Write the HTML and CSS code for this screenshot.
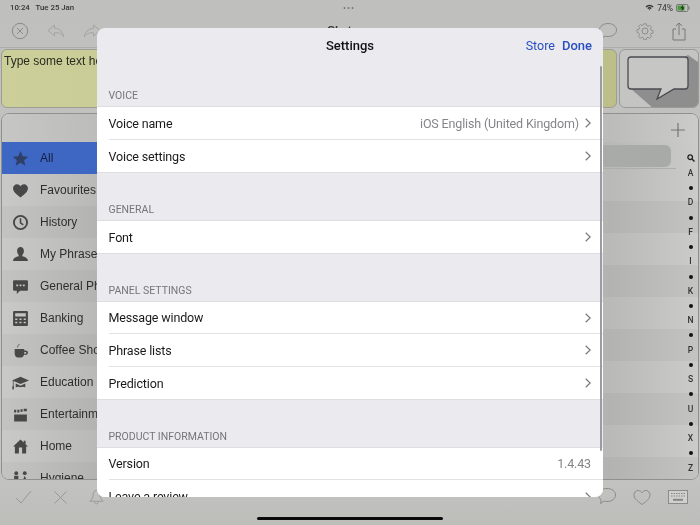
FILE: index.html
```html
<!DOCTYPE html>
<html lang="en">
<head>
  <meta charset="UTF-8" />
  <title>Settings</title>
  <meta name="viewport" content="width=device-width, initial-scale=1" />
  <link rel="stylesheet" href="styles.css">
</head>
<body>
  <div class="tablet">
    <div class="status-bar">
      <span class="status-time">10:24&nbsp;&nbsp;&nbsp;Tue 25 Jan</span>
      <span class="status-dots">&bull;&bull;&bull;</span>
      <span class="status-right">
        <svg width="9" height="7" viewBox="0 0 9 7"><path d="M0.5 2.4a5.6 5.6 0 0 1 8 0L7.5 3.4a4.2 4.2 0 0 0-6 0zM2.2 4.1a3.2 3.2 0 0 1 4.6 0L5.8 5a1.9 1.9 0 0 0-2.6 0zM3.7 5.6a1.1 1.1 0 0 1 1.6 0L4.5 6.5z" fill="#333"/></svg>
        <span>74%</span>
        <svg width="14" height="8" viewBox="0 0 14 8"><rect x="0.5" y="0.5" width="11.5" height="7" rx="1.5" fill="none" stroke="#777"/><rect x="1.5" y="1.5" width="7" height="5" fill="#4c9a40"/><rect x="12.6" y="2.6" width="1" height="2.8" fill="#777"/><path d="M7 0.8 4.6 4.3h1.8L5.6 7.2 8.4 3.5H6.6z" fill="#222"/></svg>
      </span>
    </div>

    <div class="toolbar">
      <div class="tool-group tool-group-left">
        <svg width="18" height="18" viewBox="0 0 18 18"><circle cx="9" cy="9" r="7.7" fill="none" stroke="#8b8c8a"/><path d="M6 6l6 6M12 6l-6 6" stroke="#8b8c8a"/></svg>
        <svg width="18" height="14" viewBox="0 0 18 14"><path d="M7.5 1 1 6.500l6.500 5.500V8.700c3.800-.3 6.800.6 9 4-.5-5-3.800-8-9-8.400z" fill="none" stroke="#a4a5a2"/></svg>
        <svg width="18" height="14" viewBox="0 0 18 14"><path d="M10.500 1 17 6.500 10.500 12V8.700c-3.800-.3-6.800.6-9 4 .5-5 3.800-8 9-8.400z" fill="none" stroke="#a4a5a2"/></svg>
      </div>
      <span class="toolbar-title">Chat</span>
      <div class="tool-group tool-group-right">
        <svg width="20" height="18" viewBox="0 0 20 18"><path d="M10 1.500c5 0 8.500 2.800 8.500 6.500s-3.500 6.500-8.500 6.500c-1 0-2-.1-2.900-.4L3.500 16.500l.7-3.700C2.500 11.600 1.500 9.900 1.500 8c0-3.700 3.500-6.500 8.500-6.500z" fill="none" stroke="#8b8c8a"/></svg>
        <svg width="18" height="18" viewBox="0 0 18 18"><g fill="none" stroke="#8b8c8a"><circle cx="9" cy="9" r="3"/><path d="M7.600 1h2.800l.4 2.200 1.500.7 1.900-1.200 2 2-1.200 1.900.7 1.500 2.200.4v2.800l-2.200.4-.7 1.500 1.200 1.900-2 2-1.900-1.200-1.500.7-.4 2.200H7.600l-.4-2.200-1.500-.7-1.900 1.200-2-2 1.200-1.900-.7-1.500L.1 10.400V7.600l2.200-.4.7-1.500L1.800 3.800l2-2 1.900 1.200 1.500-.7z" transform="translate(.9 .9) scale(.9)"/></g></svg>
        <svg width="14" height="19" viewBox="0 0 14 19"><path d="M4 7H1v11h12V7h-3M7 13V1M3.800 4 7 1l3.200 3" fill="none" stroke="#777876"/></svg>
      </div>
    </div>

    <div class="message-row">
      <div class="message-box">Type some text here</div>
      <div class="speak-btn">
        <svg width="78" height="59" viewBox="0 0 78 59"><path d="M10 38 34 59H78V12L68 5z" fill="#8d8e8d"/><path d="M11 7h54a3 3 0 0 1 3 3v26a3 3 0 0 1-3 3H54L37 49l4-10H11a3 3 0 0 1-3-3V10a3 3 0 0 1 3-3z" fill="#c6c7c5" stroke="#4a4b50" stroke-width="1.300"/></svg>
      </div>
    </div>

    <div class="phrase-panel">
      <div class="sidebar">
        <div class="sidebar-head"></div>
        <div class="cat-row cat-active">
          <svg class="cat-icon" viewBox="0 0 16 16"><path d="M8 1l2.100 4.800 5.200.5-3.900 3.400 1.200 5.100L8 12.100l-4.600 2.700 1.200-5.100L.7 6.300l5.200-.5z"/></svg>
          <span>All</span>
        </div>
        <div class="cat-row">
          <svg class="cat-icon" viewBox="0 0 16 16"><path d="M8 14.500C3 10.800 1 8.500 1 5.800 1 3.600 2.700 2 4.700 2 6.100 2 7.300 2.800 8 4c.7-1.200 1.900-2 3.300-2C13.300 2 15 3.600 15 5.800c0 2.700-2 5-7 8.700z"/></svg>
          <span>Favourites</span>
        </div>
        <div class="cat-row">
          <svg class="cat-icon" viewBox="0 0 16 16"><circle cx="8" cy="8" r="6.200" fill="none" stroke="#484848" stroke-width="1.800"/><path d="M8 4v4.300l2.600 2" fill="none" stroke="#484848" stroke-width="1.500"/></svg>
          <span>History</span>
        </div>
        <div class="cat-row">
          <svg class="cat-icon" viewBox="0 0 16 16"><path d="M8 1c2 0 3.200 1.600 3.200 3.700 0 1.500-.7 2.900-1.500 3.700v1.300c2.700.7 5 1.500 5.300 4.300H1c.3-2.800 2.600-3.600 5.300-4.300V8.400C5.500 7.600 4.800 6.200 4.800 4.700 4.800 2.600 6 1 8 1z"/></svg>
          <span>My Phrases</span>
        </div>
        <div class="cat-row">
          <svg class="cat-icon" viewBox="0 0 16 16"><path fill-rule="evenodd" d="M2 2h12a1 1 0 0 1 1 1v8a1 1 0 0 1-1 1H7.500L4.500 15v-3H2a1 1 0 0 1-1-1V3a1 1 0 0 1 1-1zM4 6v1.800h1.800V6zm3.100 0v1.800h1.800V6zm3.100 0v1.800H12V6z"/></svg>
          <span>General Phrases</span>
        </div>
        <div class="cat-row">
          <svg class="cat-icon" viewBox="0 0 16 16"><path fill-rule="evenodd" d="M2 1h12a1 1 0 0 1 1 1v12a1 1 0 0 1-1 1H2a1 1 0 0 1-1-1V2a1 1 0 0 1 1-1zm1 2v3h10V3zm0 5v1.500h2V8zm4 0v1.500h2V8zm4 0v1.500h2V8zm-8 3v1.500h2V11zm4 0v1.500h2V11zm4 0v1.500h2V11z"/></svg>
          <span>Banking</span>
        </div>
        <div class="cat-row">
          <svg class="cat-icon" viewBox="0 0 16 16"><path d="M2.500 6.500h9V8h1.300c1.400 0 2.200.9 2.200 2s-.8 2-2.200 2h-1.500c-.4 1.500-1.400 2.500-2.800 2.500H5.500c-1.800 0-3-1.500-3-4zm9 3V11h1.200c.5 0 .8-.5.800-.8s-.3-.7-.8-.7z"/><path d="M5 5c1.500-.5-.7-1 1-2 .7-.4 1-.5 1-1" fill="none" stroke="#484848" stroke-width=".8"/></svg>
          <span>Coffee Shop</span>
        </div>
        <div class="cat-row">
          <svg class="cat-icon" viewBox="0 0 16 16"><path d="M8 2.500 16 6l-8 3.500L1.500 6.700V12H.8V6.300L0 6z"/><path d="M3.500 9l4.500 2 4.500-2v3.500c-1.500-.6-3-1-4.500 0-1.500-1-3-.6-4.500 0z"/><rect x=".3" y="11.500" width="1.500" height="3"/></svg>
          <span>Education</span>
        </div>
        <div class="cat-row">
          <svg class="cat-icon" viewBox="0 0 16 16"><path d="M2 8h12v6.500H2z"/><path d="M2 3.500h2V6H2zm3 0h2V6H5zm3-.5h2v2.500H8zm3-.5h3V5h-3z"/></svg>
          <span>Entertainment</span>
        </div>
        <div class="cat-row">
          <svg class="cat-icon" viewBox="0 0 16 16"><path fill-rule="evenodd" d="M8 1.500l3 2.700V2.500h1.800v3.300L15 8h-1.700v6.500H2.700V8H1zM6.500 9v5.500h3V9z"/></svg>
          <span>Home</span>
        </div>
        <div class="cat-row">
          <svg class="cat-icon" viewBox="0 0 16 16"><circle cx="4" cy="3" r="1.800"/><circle cx="12" cy="3" r="1.800"/><path d="M2 5.500h4V11H5v4H3v-4H2zM12 5.500l2.700 6H13V15h-2v-3.500H9.300z"/></svg>
          <span>Hygiene</span>
        </div>
      </div>

      <div class="phrase-list">
        <div class="list-head">
          <svg width="14" height="14" viewBox="0 0 14 14"><path d="M7 0v14M0 7h14" stroke="#757674" stroke-width="1.200"/></svg>
        </div>
        <div class="search-row"><div class="search-box"></div></div>
        <div class="stripe"></div><div class="stripe stripe-dark"></div>
        <div class="stripe"></div><div class="stripe stripe-dark"></div>
        <div class="stripe"></div><div class="stripe stripe-dark"></div>
        <div class="stripe"></div><div class="stripe stripe-dark"></div>
        <div class="stripe"></div><div class="stripe stripe-dark"></div>
        <div class="alpha-index">
          <svg class="alpha-search" width="8" height="8" viewBox="0 0 8 8"><circle cx="3.200" cy="3.200" r="2.300" fill="none" stroke="#222" stroke-width="1.300"/><path d="M5 5l2.500 2.500" stroke="#222" stroke-width="1.500"/></svg>
          <span>A</span><i></i><span>D</span><i></i><span>F</span><i></i><span>I</span><i></i><span>K</span><i></i><span>N</span><i></i><span>P</span><i></i><span>S</span><i></i><span>U</span><i></i><span>X</span><i></i><span>Z</span>
        </div>
      </div>
    </div>

    <div class="bottom-bar">
      <div class="tool-group bottom-left">
        <svg width="17" height="14" viewBox="0 0 17 14"><path d="M1 8l5 5L16 1" fill="none" stroke="#979896"/></svg>
        <svg width="13" height="13" viewBox="0 0 13 13"><path d="M.5.500l12 12M12.500.500l-12 12" stroke="#979896"/></svg>
        <svg width="15" height="17" viewBox="0 0 16 17"><path d="M8 1c2.500 0 3.500 2 3.500 4.500 0 3 1.500 5 3.500 7H1c2-2 3.500-4 3.500-7C4.500 3 5.500 1 8 1zM6 13c0 3 4 3 4 0" fill="none" stroke="#979896"/></svg>
      </div>
      <div class="tool-group bottom-right">
        <svg width="18" height="17" viewBox="0 0 18 17"><path d="M9 15.500C3.500 11.500 1 9 1 5.800 1 3.300 3 1.500 5.200 1.500 6.800 1.500 8.200 2.400 9 3.800c.8-1.400 2.200-2.300 3.800-2.300C15 1.500 17 3.300 17 5.800c0 3.200-2.500 5.700-8 9.700z" fill="none" stroke="#8b8c8a"/></svg>
        <svg width="20" height="14" viewBox="0 0 20 14"><rect x=".5" y=".5" width="19" height="13" fill="#d0d1cf" stroke="#8b8c8a"/><path d="M3 3.500h14M3 6h14" stroke="#868785" stroke-dasharray="1.500 1"/><path d="M5 9.800h10" stroke="#868785" stroke-width="2"/></svg>
      </div>
    </div>

    <div class="bottom-bubble">
      <svg width="20" height="18" viewBox="0 0 20 18"><path d="M10 1.500c5 0 8.500 2.800 8.500 6.500s-3.500 6.500-8.500 6.500c-1 0-2-.1-2.900-.4L3.500 16.500l.7-3.700C2.500 11.600 1.500 9.900 1.500 8c0-3.700 3.500-6.500 8.500-6.500z" fill="none" stroke="#8b8c8a"/></svg>
    </div>

    <div class="home-indicator"></div>

    <div class="settings-sheet">
      <div class="sheet-header">
        <span class="sheet-title">Settings</span>
        <span class="sheet-actions"><span>Store</span><span class="sheet-done">Done</span></span>
      </div>
      <div class="sheet-body">
        <div class="group-label">VOICE</div>
        <div class="group">
          <div class="row"><span class="row-name">Voice name</span><span class="row-value">iOS English (United Kingdom)</span><svg class="chevron" viewBox="0 0 6 10"><path d="M.7.700 5.200 5 .7 9.300"/></svg></div>
          <div class="row"><span class="row-name">Voice settings</span><svg class="chevron" viewBox="0 0 6 10"><path d="M.7.700 5.200 5 .7 9.300"/></svg></div>
        </div>
        <div class="group-label">GENERAL</div>
        <div class="group">
          <div class="row"><span class="row-name">Font</span><svg class="chevron" viewBox="0 0 6 10"><path d="M.7.700 5.200 5 .7 9.300"/></svg></div>
        </div>
        <div class="group-label">PANEL SETTINGS</div>
        <div class="group">
          <div class="row"><span class="row-name">Message window</span><svg class="chevron" viewBox="0 0 6 10"><path d="M.7.700 5.200 5 .7 9.300"/></svg></div>
          <div class="row"><span class="row-name">Phrase lists</span><svg class="chevron" viewBox="0 0 6 10"><path d="M.7.700 5.200 5 .7 9.300"/></svg></div>
          <div class="row"><span class="row-name">Prediction</span><svg class="chevron" viewBox="0 0 6 10"><path d="M.7.700 5.200 5 .7 9.300"/></svg></div>
        </div>
        <div class="group-label">PRODUCT INFORMATION</div>
        <div class="group">
          <div class="row"><span class="row-name">Version</span><span class="row-value">1.4.43</span></div>
          <div class="row"><span class="row-name">Leave a review</span><svg class="chevron" viewBox="0 0 6 10"><path d="M.7.700 5.200 5 .7 9.300"/></svg></div>
        </div>
      </div>
      <div class="sheet-scrollbar"></div>
    </div>
  </div>
</body>
</html>
```
FILE: styles.css
```css
/* ——— page shell ——— */
html, body { margin: 0; padding: 0; }
body { width: 700px; height: 525px; overflow: hidden; font-family: "Liberation Sans", sans-serif; color: #2a2a2a; }
.tablet { position: relative; width: 700px; height: 525px; display: flex; flex-direction: column; overflow: hidden; background: linear-gradient(180deg,#bfc0bd 0%,#c6c7c4 85%,#bdbeba 100%); filter: blur(.35px); }
.tablet svg { display: block; flex: none; }

/* ——— status bar + toolbar ——— */
.status-bar { height: 15px; display: flex; align-items: center; justify-content: space-between; padding: 0 10px; font-family: Roboto, sans-serif; font-size: 8.5px; color: #333; position: relative; }
.status-time { font-size: 7.8px; font-weight: 500; }
.status-dots { position: absolute; left: 343px; top: 3px; font-size: 9px; letter-spacing: 1px; color: #777; }
.status-right { display: flex; align-items: center; gap: 3px; }
.toolbar { height: 32px; display: flex; align-items: center; justify-content: space-between; padding: 0 14px 0 11px; position: relative; border-bottom: 1px solid #aeafac; }
.tool-group { display: flex; align-items: center; }
.tool-group-left { gap: 18px; }
.tool-group-right { gap: 18px; }
.toolbar-title { position: absolute; left: 327px; top: 9px; font-size: 11px; font-weight: bold; color: #333; }

/* ——— message window ——— */
.message-row { height: 59px; display: flex; gap: 2px; padding: 1px 1px 0; }
.message-box { flex: 1; border: 1px solid #9c9d93; border-radius: 6px; background: linear-gradient(90deg,#cdcf9a,#bdbf88); padding: 4px 2px; font-size: 12px; color: #2a2a20; white-space: nowrap; }
.speak-btn { width: 78px; border: 1px solid #9a9b99; border-radius: 6px; overflow: hidden; background: #c4c5c3; }

/* ——— phrase panel ——— */
.phrase-panel { flex: 1; display: flex; margin: 5px 1px 0; border: 1px solid #90918f; border-radius: 8px; overflow: hidden; min-height: 0; }
.sidebar { width: 150px; flex: none; background: linear-gradient(90deg,#c9cac7,#b9bab7 64%); }
.sidebar-head { height: 28px; background: linear-gradient(90deg,#c6c7c4,#bcbdba 64%); }
.cat-row { height: 32px; display: flex; align-items: center; gap: 11px; padding-left: 10px; font-size: 12px; color: #2e2e2e; white-space: nowrap; }
.cat-row:nth-child(even) { background: linear-gradient(90deg,#c3c4c1,#b3b4b1 64%); }
.cat-icon { width: 17px; height: 17px; fill: #484848; }
.cat-row.cat-active { background: #3e67c4; color: #141f3c; }
.cat-active .cat-icon { fill: #2f3f66; }
.phrase-list { flex: 1; position: relative; min-width: 0; overflow: hidden; background: linear-gradient(90deg,#b9bab7 84%,#cbccc9); }
.list-head { height: 28px; box-sizing: border-box; display: flex; justify-content: flex-end; padding: 9px 13px 0 0; background: linear-gradient(90deg,#bcbdba 84%,#cbccc9); }
.search-row { height: 27px; box-sizing: border-box; padding-top: 3px; border-bottom: 1px solid #aeafac; margin-right: 22px; }
.search-box { width: 519px; height: 22px; background: linear-gradient(90deg,#b2b4b1,#a8aaa7); border-radius: 0 6px 6px 0; }
.stripe { height: 32px; }
.stripe-dark { background: linear-gradient(90deg,#b3b4b1 84%,#c3c4c1); }
.alpha-index { position: absolute; right: 0; top: 30px; width: 15px; display: flex; flex-direction: column; align-items: center; font-family: Roboto, sans-serif; font-weight: 500; font-size: 8.5px; color: #333; }
.alpha-search { margin: 10px 0 4px; }
.alpha-index span { height: 14.75px; line-height: 14.75px; }
.alpha-index i { display: block; width: 4px; height: 4px; margin: 5.37px 0; border-radius: 50%; background: #111; }

/* ——— bottom bar ——— */
.bottom-bar { height: 45px; flex: none; display: flex; justify-content: space-between; padding: 8px 12px 0 15px; box-sizing: border-box; }
.bottom-bar .tool-group { height: 18px; }
.bottom-left { gap: 22px; }
.bottom-right { gap: 17px; }
.bottom-bubble { position: absolute; left: 597px; top: 487px; }
.home-indicator { position: absolute; left: 257px; bottom: 5px; width: 186px; height: 3px; border-radius: 2px; background: #0a0a0a; }

/* ——— settings sheet ——— */
.settings-sheet { position: absolute; left: 97px; top: 28px; width: 506px; height: 469px; border-radius: 8px; overflow: hidden; background: #eaeaef; font-family: Roboto, sans-serif; display: flex; flex-direction: column; }
.sheet-header { height: 35px; flex: none; display: flex; align-items: center; justify-content: center; position: relative; }
.sheet-title { font-size: 13px; font-weight: 500; color: #111; }
.sheet-actions { position: absolute; right: 11px; top: 10px; display: flex; gap: 7px; font-size: 12.5px; color: #2a4fc0; }
.sheet-done { font-weight: 500; font-size: 13px; }
.sheet-body { flex: 1; overflow: hidden; padding-top: 25px; }
.group-label { height: 19px; margin-top: 29.5px; padding-left: 11.5px; font-size: 10.5px; line-height: 15px; color: #75757a; }
.group-label:first-child { margin-top: 0; }
.group { background: #fff; box-shadow: 0 0 0 1px #dedee2; }
.row { height: 32.5px; box-sizing: border-box; display: flex; align-items: center; margin-left: 11.5px; padding: .5px 12px 0 0; font-size: 12.5px; letter-spacing: -.15px; color: #1a1a1a; border-bottom: 1px solid #e2e2e6; }
.row:last-child { border-bottom: none; }
.row-name { flex: 1; }
.row-value { color: #85858a; }
.chevron { width: 6px; height: 10px; margin-left: 6px; fill: none; stroke: #77777c; stroke-width: 1.2; }
.sheet-scrollbar { position: absolute; right: 1px; top: 38px; width: 2.5px; height: 385px; border-radius: 2px; background: #9b9ba0; }
```
